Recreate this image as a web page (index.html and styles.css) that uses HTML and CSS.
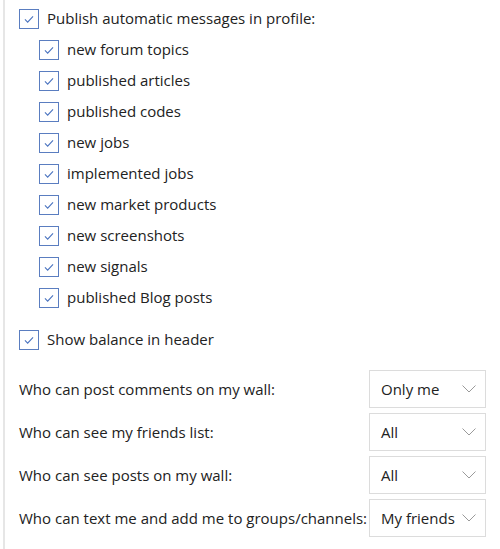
FILE: index.html
```html
<!DOCTYPE html>
<html lang="en">
<head>
    <meta charset="UTF-8">
    <title>Profile settings</title>
    <link rel="stylesheet" href="styles.css">
</head>
<body>
    <div class="settings">
        <label class="check">
            <span class="box"><svg viewBox="0 0 20 20"><path d="M5.5 10.5l3 3 6-6.5"/></svg></span>
            Publish automatic messages in profile:
        </label>
        <div class="sub">
            <label class="check"><span class="box"><svg viewBox="0 0 20 20"><path d="M5.5 10.5l3 3 6-6.5"/></svg></span>new forum topics</label>
            <label class="check"><span class="box"><svg viewBox="0 0 20 20"><path d="M5.5 10.5l3 3 6-6.5"/></svg></span>published articles</label>
            <label class="check"><span class="box"><svg viewBox="0 0 20 20"><path d="M5.5 10.5l3 3 6-6.5"/></svg></span>published codes</label>
            <label class="check"><span class="box"><svg viewBox="0 0 20 20"><path d="M5.5 10.5l3 3 6-6.5"/></svg></span>new jobs</label>
            <label class="check"><span class="box"><svg viewBox="0 0 20 20"><path d="M5.5 10.5l3 3 6-6.5"/></svg></span>implemented jobs</label>
            <label class="check"><span class="box"><svg viewBox="0 0 20 20"><path d="M5.5 10.5l3 3 6-6.5"/></svg></span>new market products</label>
            <label class="check"><span class="box"><svg viewBox="0 0 20 20"><path d="M5.5 10.5l3 3 6-6.5"/></svg></span>new screenshots</label>
            <label class="check"><span class="box"><svg viewBox="0 0 20 20"><path d="M5.5 10.5l3 3 6-6.5"/></svg></span>new signals</label>
            <label class="check"><span class="box"><svg viewBox="0 0 20 20"><path d="M5.5 10.5l3 3 6-6.5"/></svg></span>published Blog posts</label>
        </div>
        <label class="check balance"><span class="box"><svg viewBox="0 0 20 20"><path d="M5.5 10.5l3 3 6-6.5"/></svg></span>Show balance in header</label>

        <div class="privacy">
            <div class="field">
                <span>Who can post comments on my wall:</span>
                <div class="select">Only me<svg viewBox="0 0 14 8"><path d="M0.5 0.5l6.5 6.5 6.5-6.5"/></svg></div>
            </div>
            <div class="field">
                <span>Who can see my friends list:</span>
                <div class="select">All<svg viewBox="0 0 14 8"><path d="M0.5 0.5l6.5 6.5 6.5-6.5"/></svg></div>
            </div>
            <div class="field">
                <span>Who can see posts on my wall:</span>
                <div class="select">All<svg viewBox="0 0 14 8"><path d="M0.5 0.5l6.5 6.5 6.5-6.5"/></svg></div>
            </div>
            <div class="field">
                <span>Who can text me and add me to groups/channels:</span>
                <div class="select">My friends<svg viewBox="0 0 14 8"><path d="M0.5 0.5l6.5 6.5 6.5-6.5"/></svg></div>
            </div>
        </div>
    </div>
</body>
</html>
```

FILE: styles.css
```css
body {
    margin: 0;
    font-family: 'Open Sans', sans-serif;
    font-size: 15px;
    color: #222;
    background: #fff;
}
.settings {
    margin-left: 3px;
    border-left: 2px solid #e6e6e6;
    padding: 2px 0 12px 14px;
    width: 483px;
    box-sizing: border-box;
}
.check {
    display: flex;
    align-items: center;
    height: 31px;
}
.box {
    width: 18px;
    height: 18px;
    border: 1px solid #5a7dc0;
    margin-right: 8px;
    flex-shrink: 0;
    display: flex;
    position: relative;
    top: 1px;
}
.box svg {
    width: 18px;
    height: 18px;
}
.box path {
    fill: none;
    stroke: #4a73bf;
    stroke-width: 1.2;
}
.sub {
    padding-left: 20px;
}
.balance {
    margin-top: 11px;
}
.privacy {
    margin-top: 16px;
    display: flex;
    flex-direction: column;
    gap: 5px;
}
.field {
    display: flex;
    align-items: center;
    justify-content: space-between;
    white-space: nowrap;
}
.select {
    width: 117px;
    height: 38px;
    box-sizing: border-box;
    border: 1px solid #dcdcdc;
    padding: 0 9px 0 11px;
    display: flex;
    align-items: center;
    justify-content: space-between;
    flex-shrink: 0;
}
.select svg {
    width: 14px;
    height: 8px;
}
.select path {
    fill: none;
    stroke: #9a9a9a;
    stroke-width: 1;
}
```
